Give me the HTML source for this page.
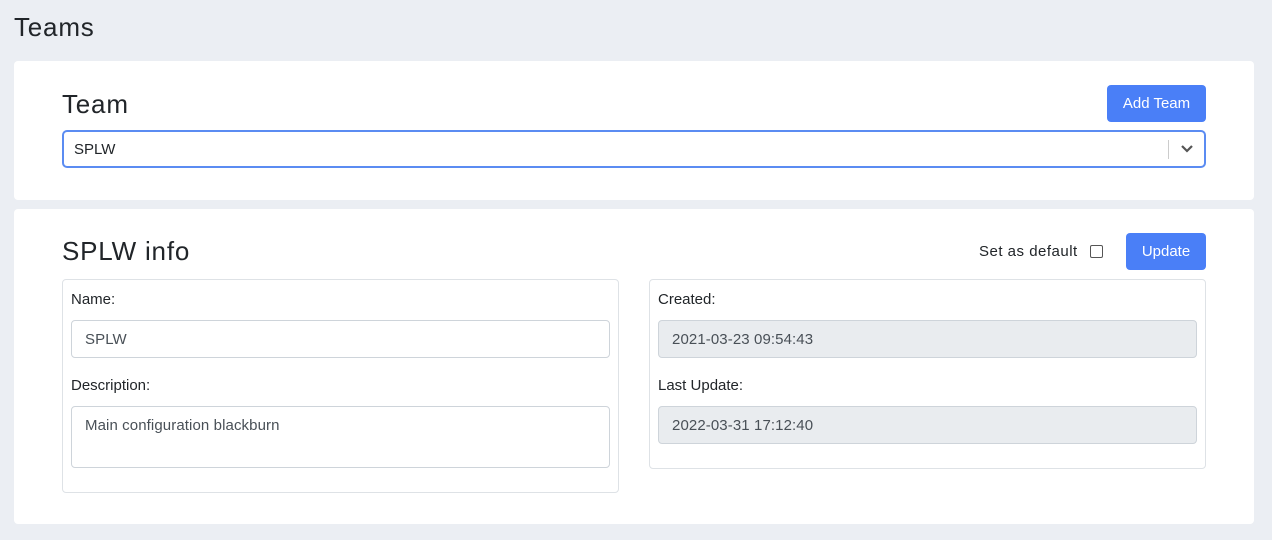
<!DOCTYPE html>
<html><head><meta charset="utf-8"><style>
*{box-sizing:border-box;margin:0;padding:0}
body{width:1272px;height:540px;background:#ebeef3;font-family:"Liberation Sans",sans-serif;color:#212529;position:relative;overflow:hidden}
.a{position:absolute}
.card{position:absolute;background:#fff;border-radius:4px}
h1{position:absolute;font-weight:400;font-size:26px;line-height:30px;letter-spacing:0.8px}
.btn{position:absolute;background:#4a7ff7;color:#fff;border-radius:4px;font-size:15px;display:flex;align-items:center;justify-content:center}
.box{position:absolute;border:1px solid #dee2e6;border-radius:4px}
.lbl{position:absolute;font-size:15px;line-height:18px}
.inp{position:absolute;border:1px solid #ced4da;border-radius:4px;font-size:15px;color:#495057;padding-left:13px;display:flex;align-items:center;letter-spacing:0.1px}
.ro{background:#e9ecef}
</style></head><body>
<h1 style="left:14px;top:12px">Teams</h1>
<div class="card" style="left:14px;top:61px;width:1240px;height:139px"></div>
<h1 style="left:62px;top:89px">Team</h1>
<div class="btn" style="left:1107px;top:85px;width:99px;height:37px">Add Team</div>
<div class="a" style="left:62px;top:130px;width:1144px;height:38px;border:2px solid #5b8cf2;border-radius:5px;font-size:15px;padding-left:10px;display:flex;align-items:center">SPLW</div>
<div class="a" style="left:1168px;top:140px;width:1px;height:19px;background:#ccc"></div>
<svg class="a" style="left:1180px;top:144px" width="14" height="10" viewBox="0 0 14 10"><path d="M2 2 L7 7 L12 2" stroke="#555" stroke-width="2.2" fill="none"/></svg>
<div class="card" style="left:14px;top:209px;width:1240px;height:315px"></div>
<h1 style="left:62px;top:236px">SPLW info</h1>
<div class="lbl" style="left:979px;top:243px;letter-spacing:0.5px">Set as default</div>
<div class="a" style="left:1090px;top:245px;width:13px;height:13px;border:1px solid #555;border-radius:2px"></div>
<div class="btn" style="left:1126px;top:233px;width:80px;height:37px">Update</div>
<div class="box" style="left:62px;top:279px;width:557px;height:214px"></div>
<div class="lbl" style="left:71px;top:291px">Name:</div>
<div class="inp" style="left:71px;top:320px;width:539px;height:38px">SPLW</div>
<div class="lbl" style="left:71px;top:377px">Description:</div>
<div class="inp" style="left:71px;top:406px;width:539px;height:62px;align-items:flex-start;padding-top:10px">Main configuration blackburn</div>
<div class="box" style="left:649px;top:279px;width:557px;height:190px"></div>
<div class="lbl" style="left:658px;top:291px">Created:</div>
<div class="inp ro" style="left:658px;top:320px;width:539px;height:38px">2021-03-23 09:54:43</div>
<div class="lbl" style="left:658px;top:377px">Last Update:</div>
<div class="inp ro" style="left:658px;top:406px;width:539px;height:38px">2022-03-31 17:12:40</div>
</body></html>
